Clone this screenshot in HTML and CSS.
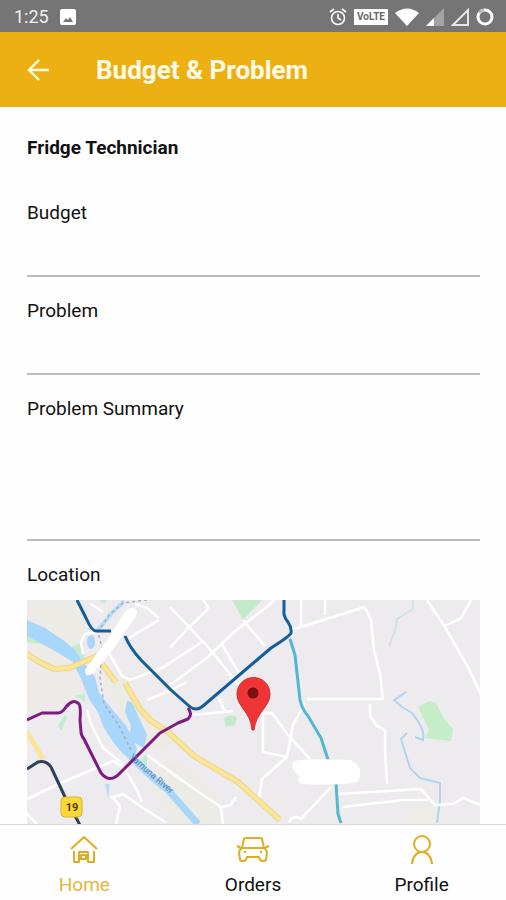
FILE: index.html
```html
<!DOCTYPE html>
<html lang="en">
<head>
    <meta charset="UTF-8">
    <meta name="viewport" content="width=device-width, initial-scale=1.0">
    <title>Budget &amp; Problem</title>
    <link rel="stylesheet" href="styles.css">
</head>
<body>
    <div class="status-bar">
        <span class="clock">1:25</span>
        <svg width="16" height="16" viewBox="0 0 16 16">
            <rect width="16" height="16" rx="2" fill="#fff"/>
            <path d="M3 13l3-4 2 2 2-3 3 5z" fill="#777"/>
        </svg>
        <div class="status-icons">
            <svg width="18" height="18" viewBox="0 0 18 18" fill="none" stroke="#fff" stroke-width="1.600">
                <circle cx="9" cy="10" r="6.500"/>
                <path d="M9 6v4l3 2M1 4l4-3M17 4l-4-3"/>
            </svg>
            <span class="volte">VoLTE</span>
            <svg width="24" height="18" viewBox="0 0 24 18">
                <path d="M0 5Q12-4 24 5L12 18z" fill="#fff"/>
            </svg>
            <svg width="18" height="18" viewBox="0 0 18 18">
                <path d="M18 0v18H0z" fill="#a3a3a3"/>
                <path d="M8 10v8H0z" fill="#fff"/>
            </svg>
            <svg width="18" height="18" viewBox="0 0 18 18">
                <path d="M17 2v15H2z" fill="none" stroke="#e6e6e6" stroke-width="2"/>
            </svg>
            <svg width="18" height="18" viewBox="0 0 18 18" fill="none" stroke-width="3">
                <circle cx="9" cy="9" r="7" stroke="#fff"/>
                <path d="M3 5A7 7 0 0 1 8 2" stroke="#bbb"/>
            </svg>
        </div>
    </div>

    <header class="app-bar">
        <button class="back" type="button" aria-label="Back">
            <svg width="22" height="22" viewBox="0 0 22 22" fill="none" stroke="#fffbe8" stroke-width="2.400">
                <path d="M22 11H2M12 1L2 11l10 10"/>
            </svg>
        </button>
        <h1>Budget &amp; Problem</h1>
    </header>

    <main>
        <h2>Fridge Technician</h2>
        <div class="field">
            <label for="budget">Budget</label>
            <input id="budget" type="text">
        </div>
        <div class="field">
            <label for="problem">Problem</label>
            <input id="problem" type="text">
        </div>
        <div class="field">
            <label for="summary">Problem Summary</label>
            <textarea id="summary"></textarea>
        </div>
        <h3>Location</h3>
        <div class="map">
            <svg viewBox="0 0 453 224" preserveAspectRatio="xMidYMin slice" role="img" aria-label="Map">
                <rect width="453" height="224" fill="#eeebef"/>

                <!-- land and parks -->
                <path d="M0 0h54l12 30-10 20-20-10L0 22zM0 32l40 18 16 14-26 8L0 54z" fill="#edebe6"/>
                <path d="M74 70l26 14 34 40 20 14-14 12-30-8-24-40zM120 172l34-12 38 38 2 26h-50z" fill="#ecebe5"/>
                <path d="M0 68l52-8 8 30-24 16L0 118z" fill="#edeae8"/>
                <path d="M382 212l24-6v18h-27z" fill="#efede3"/>
                <path d="M205 0h30l-19 20z" fill="#c4ebc9"/>
                <path d="M72 0h8l-3 4zM197 118l6-3 7 2-2 8-9 2z" fill="#c5e9cc"/>
                <path d="M391 107l12-6 6 2 8 16 9 10-2 12-26-3 4-8z" fill="#c5edc7"/>
                <path d="M42 48l14-6 2 24-8-8zM0 34l16 6-4 4-12-2zM48 96l10-3v8zM38 115l2 3-6 13-3-6zM112 160l8-6v14z" fill="#c5ebcf"/>

                <!-- river -->
                <path d="M0 20l18 8 18 12 12 10 8 12 12 15 4 16 8 10 20 24 10 22-2 9-12-4-10-12-9-14-6-16-9-13-8-20-8-17-18-11L0 36z" fill="#a9d6fb"/>
                <path d="M100 101q6 0 8 8l12 26-3 13-15-8 2-14-6-14z" fill="#a9d6fb"/>
                <ellipse cx="64" cy="42" rx="4" ry="7" fill="#a9d6fb"/>
                <path d="M98 150q24 26 43 40l30 34" fill="none" stroke="#a9d6fb" stroke-width="7"/>
                <path d="M70 31l15-18 12-12" fill="none" stroke="#b7dcf6" stroke-width="4"/>
                <path d="M78 184h5l-2 14z" fill="#b7dcf6"/>
                <g fill="none" stroke="#b3d4ed" stroke-width="2">
                    <path d="M379 92l-12 8 8 7 10 6q14 17 11 27l-8-3M380 133l-6 6 9 29 10 10 20 5v18l-3 22"/>
                    <path d="M386 0v9l-16 10-2 12-6 15" stroke="#d3e1e9"/>
                </g>

                <!-- minor streets -->
                <g fill="none" stroke="#fff" stroke-width="2.500">
                    <path d="M0 199l36-17 50-21 11 7 12 20 6 14M84 198l12-4 20 14 22 14M84 196l9 10-4 18M60 110l4 14 12 24 20 16M0 214l10 10"/>
                    <path d="M77 44l18 32 8 4 32-12 40-26M120 100l20-8 20-10M102 38l30-18M64 4l12 8M108 4l12 4 12 10"/>
                    <path d="M56 54l-2-12 4-8 12-2"/>
                    <path d="M143 85l38-28 26-25 34-26 6-6M143 7l40 42 30 38M176 0q8 8 2 12l-18 17M216 20l22 26M143 48l20-22M194 43l18 30M192 98l6 14M166 115l40-4M120 155l50 36 24 16 2 17M192 208l12-3 5-8M228 113h17l16 22 22 24M236 112v40l24 5 6-32 12-22M260 157l-25 22-3 20M262 222q4-8 12-3l30-32"/>
                    <path d="M264 30l74-23M274 0v26M298 0v15M338 7l6 13 3 30 6 24 3 25H280M343 104v12l7 10 8 4v22l2 32M400 0l18 27 24 42 12 26M418 26l16-8 10-18M310 194l84-5 7 8 7 8 18-1 10-6 18 7M316 207l60-7h25"/>
                </g>

                <!-- main roads -->
                <path d="M0 54l14 9 13 6 15-1 28-12M75 64l14 18M98 83l15 26 10 11 18 12 26 24 44 26 42 38" fill="none" stroke="#ead58c" stroke-width="6"/>
                <path d="M0 54l14 9 13 6 15-1 28-12M75 64l14 18M98 83l15 26 10 11 18 12 26 24 44 26 42 38" fill="none" stroke="#fbe596" stroke-width="4"/>
                <path d="M0 132l16 27" fill="none" stroke="#fbe596" stroke-width="5"/>
                <path d="M120 0L96 3 82 15 71 32l4 16-2 30 4 26 14 20 14 28" fill="none" stroke="#a7afb9" stroke-width="1.500" stroke-dasharray="3 3"/>

                <!-- metro lines -->
                <g fill="none" stroke-width="3" stroke-linejoin="round">
                    <path d="M50 0l10 20q5 11 9 11h15M98 36q5 12 16 24l30 30 18 16q7 6 14 0l68-58q19-12 20-15 1-5-3-11-5-6-4-12V0" stroke="#125e9b"/>
                    <path d="M0 120l15-7h16q4 0 8-6 7-9 13-3 2 3 1 16l1 12q0 3 3 7l9 18 8 16q9 11 19 0l40-40 18-10 10-4q5-5 0-11" stroke="#7b1c81"/>
                    <path d="M263 39l5 16 5 45q2 9 8 16l13 22 12 37 3 8 2 31 3 9" stroke="#53b6d3"/>
                    <path d="M0 169l11-7q8-2 13 5l14 30 16 30" stroke="#2d4058"/>
                </g>

                <text x="102" y="158" transform="rotate(41 102 158)" class="river-name">Yamuna River</text>
                <rect x="34" y="197" width="21" height="20" rx="4" fill="#fdd835" stroke="#d8b32a"/>
                <text x="45" y="211" text-anchor="middle" class="road-number">19</text>

                <!-- cleared spots -->
                <path d="M58 70l22-30 18-28q4-6 11-3 2 4-1 9L84 52 69 70q-4 6-10 5z" fill="#fff"/>
                <path d="M267 161q15-3 57-1 10 5 9 14 0 9-7 9-24 3-50 1-7-1-4-8-10-8-5-15z" fill="#fff"/>

                <!-- pin -->
                <path d="M225 130c-1-18-15-23-15-36a16 16 0 0 1 33 0c0 13-14 18-16 36z" fill="#ee3435" stroke="#d42d2e"/>
                <circle cx="226" cy="93" r="5.500" fill="#7c1010"/>
            </svg>
        </div>
    </main>

    <nav>
        <a href="#" class="active">
            <svg width="30" height="32" viewBox="0 0 30 32">
                <path d="M2 16L15 4l13 12M5 18v11h5V19h9v10h6V18M12 26v-4h5v4z"/>
            </svg>
            Home
        </a>
        <a href="#">
            <svg width="34" height="32" viewBox="0 0 34 32">
                <path d="M6 15L8 6q0-1 2-1h14q2 0 2 1l2 9zM6 15q-3 2-3 5l1 6q0 2 2 2h2q2 0 3-4h12q1 4 3 4h2q2 0 2-2l1-6q0-3-3-5M1 13l4 2M33 13l-4 2M8 19h2M24 19h2"/>
            </svg>
            Orders
        </a>
        <a href="#">
            <svg width="30" height="32" viewBox="0 0 30 32">
                <circle cx="15" cy="11" r="8"/>
                <path d="M5 31c1-16 19-16 20 0"/>
            </svg>
            Profile
        </a>
    </nav>
</body>
</html>
```

FILE: styles.css
```css
* {
    box-sizing: border-box;
}
body {
    margin: 0;
    height: 100vh;
    display: flex;
    flex-direction: column;
    background-color: #fefefe;
    color: #111;
    font-family: Roboto, sans-serif;
    font-size: 19px;
    line-height: 24px;
}
svg {
    display: block;
}
.status-bar {
    display: flex;
    align-items: center;
    height: 32px;
    padding: 2px 12px 0 14px;
    background-color: #757575;
    color: #eee;
}
.clock {
    margin-right: 11px;
    font-size: 18px;
}
.status-icons {
    display: flex;
    align-items: center;
    gap: 7px;
    margin-left: auto;
}
.volte {
    padding: 0 3px;
    background-color: #fff;
    color: #666;
    font-size: 10px;
    font-weight: bold;
    line-height: 16px;
}
.app-bar {
    display: flex;
    align-items: center;
    gap: 47px;
    height: 75px;
    padding: 0 27px;
    background-color: #edb012;
}
.back {
    padding: 0;
    border: none;
    background: none;
    cursor: pointer;
}
h1 {
    margin: 0;
    color: #fffbe8;
    font-size: 26px;
    line-height: 32px;
}
main {
    flex: 1;
    min-height: 0;
    display: flex;
    flex-direction: column;
    padding: 29px 26px 0 27px;
    overflow: hidden;
}
h2 {
    margin: 0 0 41px;
    font-size: 19px;
    line-height: 24px;
}
.field {
    margin-bottom: 22px;
}
.field label {
    display: block;
}
.field input,
.field textarea {
    display: block;
    width: 100%;
    height: 52px;
    padding: 8px 0;
    border: none;
    border-bottom: 2px solid #bcbcbc;
    background: none;
    font: inherit;
    outline: none;
    resize: none;
}
.field textarea {
    height: 120px;
}
h3 {
    margin: 0 0 13px;
    font-size: 19px;
    font-weight: normal;
}
.map {
    flex: 1;
    min-height: 0;
}
.map svg {
    width: 100%;
    height: 100%;
}
.river-name {
    fill: #5583a7;
    font-size: 9px;
}
.road-number {
    fill: #4b3b08;
    font-size: 11px;
    font-weight: bold;
}
nav {
    display: flex;
    height: 76px;
    border-top: 1px solid #d8d8d8;
    background-color: #fefefe;
}
nav a {
    flex: 1;
    display: flex;
    flex-direction: column;
    align-items: center;
    gap: 8px;
    padding-top: 8px;
    color: #111;
    text-decoration: none;
}
nav svg {
    fill: none;
    stroke: #e0ac22;
    stroke-width: 2;
    stroke-linejoin: round;
}
nav .active {
    color: #e3b73c;
}
```
